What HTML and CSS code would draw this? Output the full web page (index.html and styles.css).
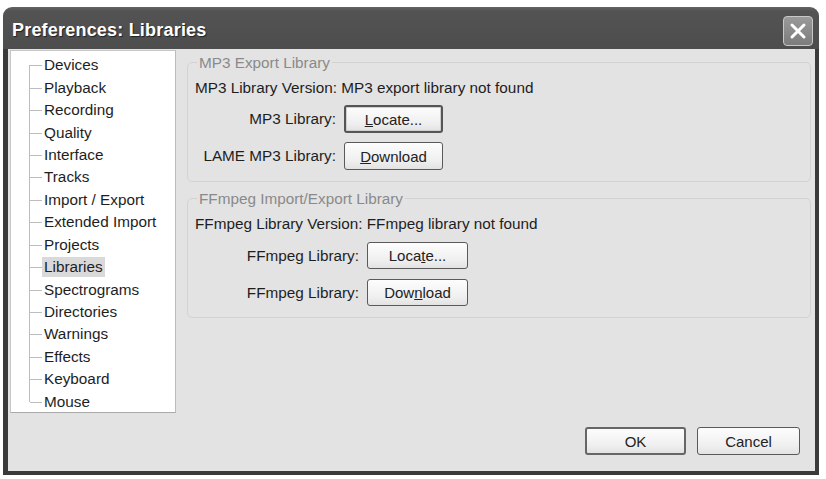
FILE: index.html
```html
<!DOCTYPE html>
<html lang="en">
<head>
  <meta charset="UTF-8" />
  <title>Preferences: Libraries</title>
  <link rel="stylesheet" href="styles.css">
</head>
<body>
  <div class="window">
    <div class="titlebar">
      <span class="title">Preferences: Libraries</span>
      <button class="close" aria-label="Close">
        <svg width="20" height="20" viewBox="0 0 20 20">
          <path d="M4 4 L16 16 M16 4 L4 16" stroke="#fff" stroke-width="3" stroke-linecap="round" />
        </svg>
      </button>
    </div>

    <div class="frame">
      <div class="main">
        <ul class="tree">
          <li><span>Devices</span></li>
          <li><span>Playback</span></li>
          <li><span>Recording</span></li>
          <li><span>Quality</span></li>
          <li><span>Interface</span></li>
          <li><span>Tracks</span></li>
          <li><span>Import / Export</span></li>
          <li><span>Extended Import</span></li>
          <li><span>Projects</span></li>
          <li class="selected"><span>Libraries</span></li>
          <li><span>Spectrograms</span></li>
          <li><span>Directories</span></li>
          <li><span>Warnings</span></li>
          <li><span>Effects</span></li>
          <li><span>Keyboard</span></li>
          <li><span>Mouse</span></li>
        </ul>

        <div class="pane">
          <fieldset class="group mp3">
            <legend>MP3 Export Library</legend>
            <p class="version">MP3 Library Version: MP3 export library not found</p>
            <div class="row">
              <label>MP3 Library:</label>
              <button class="btn default"><u>L</u>ocate...</button>
            </div>
            <div class="row">
              <label>LAME MP3 Library:</label>
              <button class="btn"><u>D</u>ownload</button>
            </div>
          </fieldset>

          <fieldset class="group ffmpeg">
            <legend>FFmpeg Import/Export Library</legend>
            <p class="version">FFmpeg Library Version: FFmpeg library not found</p>
            <div class="row">
              <label>FFmpeg Library:</label>
              <button class="btn">Loca<u>t</u>e...</button>
            </div>
            <div class="row">
              <label>FFmpeg Library:</label>
              <button class="btn">Dow<u>n</u>load</button>
            </div>
          </fieldset>
        </div>
      </div>

      <div class="footer">
        <button class="btn ok">OK</button>
        <button class="btn cancel">Cancel</button>
      </div>
    </div>
  </div>
</body>
</html>
```

FILE: styles.css
```css
body {
  margin: 0;
  background: #fff;
  font-family: 'Liberation Sans', Arial, sans-serif;
  font-size: 15.3px;
  color: #1e1e1e;
}

.window {
  width: 816px;
  margin: 7px 0 0 3px;
}

.titlebar {
  height: 42px;
  display: flex;
  align-items: center;
  justify-content: space-between;
  padding: 5px 6px 0 9px;
  box-sizing: border-box;
  background: linear-gradient(#646464 0, #535353 4px, #4d4d4d 100%);
  border-radius: 9px 9px 0 0;
}

.title {
  color: #fff;
  font-weight: bold;
  font-size: 18px;
  text-shadow: 1px 1px 1px #222;
  letter-spacing: 0.2px;
}

.close {
  width: 30px;
  height: 30px;
  padding: 0;
  display: flex;
  align-items: center;
  justify-content: center;
  background: linear-gradient(#9a9a9a, #7c7c7c);
  border: 1px solid #c8c8c8;
  border-radius: 4px;
}

.frame {
  background: #e3e3e3;
  border-left: 5px solid #3a3a3a;
  border-right: 4px solid #3a3a3a;
  border-bottom: 4px solid #3a3a3a;
  padding: 1px 4px 16px 2px;
}

.main {
  display: flex;
  gap: 11px;
}

/* navigation tree */
.tree {
  list-style: none;
  margin: 0;
  padding: 3px 0 0;
  width: 166px;
  height: 363px;
  box-sizing: border-box;
  background: #fff;
  border: 1px solid #c6c6c6;
  border-right-color: #bbb;
  border-bottom-color: #aaa;
}

.tree li {
  position: relative;
  height: 22.45px;
  padding-left: 31px;
  display: flex;
  align-items: center;
}

.tree li::before {
  content: "";
  position: absolute;
  left: 18px;
  top: 0;
  bottom: 0;
  border-left: 1px solid #bdbdbd;
}

.tree li:first-child::before { top: 50%; }
.tree li:last-child::before { bottom: 50%; }

.tree li::after {
  content: "";
  position: absolute;
  left: 19px;
  top: 50%;
  width: 12px;
  border-top: 1px solid #bdbdbd;
}

.tree li span {
  padding: 1px 2px;
  line-height: 18px;
}

.tree li.selected span {
  background: #d9d9d9;
}

/* option groups */
.pane {
  flex: 1;
  padding-top: 4px;
}

.group {
  margin: 0 0 8px;
  padding: 8px 0 11px 7px;
  border: 1px solid #d2d2d2;
  border-radius: 5px;
}

.group legend {
  color: #8a8a8a;
  padding: 0 2px;
  margin-left: 2px;
  line-height: 17px;
}

.version {
  margin: 0 0 9px;
  line-height: 17px;
}

.row {
  display: flex;
  align-items: center;
  gap: 8px;
  margin-top: 9px;
}

.row label {
  text-align: right;
}

.mp3 .row label { width: 141px; }
.ffmpeg .row label { width: 164px; }

.ffmpeg .row { margin-top: 10px; }
.ffmpeg .btn { width: 101px; height: 27px; }

.btn {
  font-family: inherit;
  font-size: 15px;
  color: #222;
  width: 99px;
  height: 28px;
  padding: 0;
  background: linear-gradient(#fdfdfd, #efefef 70%, #e2e2e2);
  border: 1px solid #5a5a5a;
  border-radius: 3px;
}

.btn.default {
  border: 2px solid #555;
  box-shadow: inset 0 0 0 1px #cfcfcf;
}

.footer {
  display: flex;
  justify-content: flex-end;
  gap: 11px;
  margin-top: 14px;
  padding-right: 11px;
}

.btn.ok {
  width: 101px;
  border: 2px solid #666;
}

.btn.cancel {
  width: 103px;
}
```
